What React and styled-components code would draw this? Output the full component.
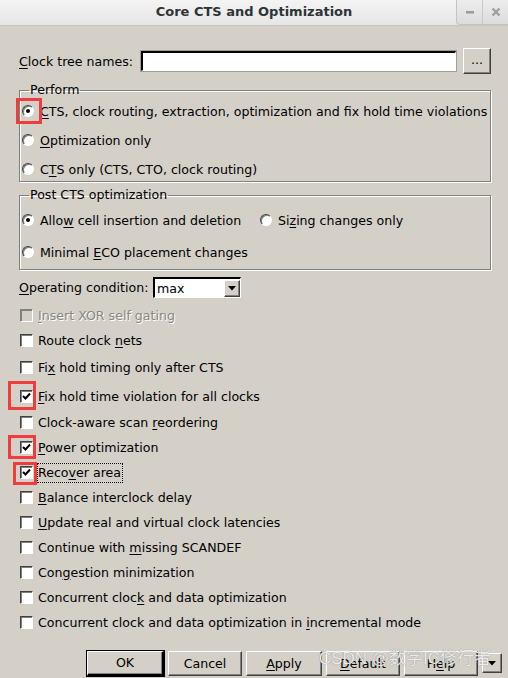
import React from "react";
import styled, { createGlobalStyle, css } from "styled-components";

const Global = createGlobalStyle`
  html, body { margin: 0; padding: 0; background: #d4d0c8; }
  body { font-family: "DejaVu Sans", "Noto Sans CJK SC", sans-serif; font-size: 12.6px; color: #000; }
`;

const Window = styled.div`
  position: relative;
  width: 508px;
  height: 678px;
  overflow: hidden;
  background: #d4d0c8;
`;

const TitleBar = styled.div`
  height: 26px;
  display: flex;
  align-items: flex-start;
  background: linear-gradient(#f4f4f4, #e6e6e6);
  border-bottom: 1px solid #c9c6bf;
  box-sizing: border-box;
  padding-left: 52px;
`;

const Title = styled.div`
  flex: 1;
  text-align: center;
  font-weight: bold;
  font-size: 13px;
  line-height: 24px;
  color: #2e3436;
`;

const WinButtons = styled.div`
  display: flex;
  height: 24px;
  border-left: 1px solid #c4c4c4;
  border-bottom: 1px solid #c4c4c4;
  border-bottom-left-radius: 4px;
  background: linear-gradient(#ededed, #dcdcdc);
`;

const WinBtn = styled.div`
  width: 25px;
  display: flex;
  align-items: center;
  justify-content: center;
  & + & { border-left: 1px solid #c8c8c8; }
`;

const Content = styled.div`
  padding: 0 17px 0 19px;
`;

const Mn = styled.span`
  text-decoration: underline;
  text-underline-offset: 2px;
`;

const TreeRow = styled.div`
  display: flex;
  align-items: center;
  margin-top: 22px;
  height: 26px;
`;

const Label = styled.span`
  white-space: nowrap;
  width: ${(p) => p.$w}px;
  flex: none;
`;

const TextInput = styled.div`
  flex: 1;
  height: 20px;
  background: #fff;
  box-sizing: border-box;
  border-top: 2px solid #000;
  border-left: 2px solid #000;
  border-right: 1px solid #fff;
  border-bottom: 1px solid #fff;
  outline: 1px solid #a09d96;
`;

const RaisedBtn = styled.div`
  box-sizing: border-box;
  background: #d4d0c8;
  border-top: 1px solid #fff;
  border-left: 1px solid #fff;
  border-right: 1px solid #404040;
  border-bottom: 1px solid #404040;
  box-shadow: inset -1px -1px 0 #808080;
  display: flex;
  align-items: center;
  justify-content: center;
  white-space: nowrap;
  flex: none;
`;

const DotsBtn = styled(RaisedBtn)`
  width: 28px;
  height: 26px;
  margin-left: 7px;
  padding-bottom: 4px;
`;

const Group = styled.fieldset`
  margin: ${(p) => p.$top}px 0 0 0;
  padding: ${(p) => p.$pad};
  border: 1px solid #808080;
  box-shadow: inset 1px 1px 0 #fff, 1px 1px 0 #fff;
  min-width: 0;
`;

const Legend = styled.legend`
  margin-left: 8px;
  padding: 0 1px;
  line-height: 14px;
  height: 14px;
`;

const RadioRows = styled.div`
  display: flex;
  flex-direction: column;
  gap: ${(p) => p.$gap}px;
`;

const RowGrid = styled.div`
  display: grid;
  grid-template-columns: ${(p) => p.$cols || "1fr"};
`;

const Option = styled.div`
  display: flex;
  align-items: center;
  height: 20px;
  white-space: nowrap;
  color: ${(p) => (p.$disabled ? "#8a877f" : "#000")};
  ${(p) =>
    p.$disabled &&
    css`
      text-shadow: 1px 1px 0 #fff;
    `}
`;

const RadioDot = styled.span`
  width: 12px;
  height: 12px;
  border-radius: 50%;
  box-sizing: border-box;
  background: #fff;
  border: 1px solid;
  border-color: #404040 #fff #fff #404040;
  box-shadow: inset 1px 1px 0 #808080;
  margin: 0 6px 0 1px;
  position: relative;
  flex: none;
  ${(p) =>
    p.$on &&
    css`
      &::after {
        content: "";
        position: absolute;
        left: 3px;
        top: 3px;
        width: 4px;
        height: 4px;
        border-radius: 50%;
        background: #000;
      }
    `}
`;

const Box = styled.span`
  width: 13px;
  height: 13px;
  box-sizing: border-box;
  background: ${(p) => (p.$disabled ? "#d4d0c8" : "#fff")};
  border-top: 1px solid ${(p) => (p.$disabled ? "#808080" : "#404040")};
  border-left: 1px solid ${(p) => (p.$disabled ? "#808080" : "#404040")};
  border-right: 1px solid #fff;
  border-bottom: 1px solid #fff;
  box-shadow: inset 1px 1px 0 #808080;
  margin: 0 5px 0 0;
  flex: none;
  display: flex;
  align-items: center;
  justify-content: center;
`;

const CondRow = styled.div`
  display: flex;
  align-items: center;
  margin-top: 7px;
  height: 21px;
`;

const Select = styled.div`
  width: 88px;
  height: 21px;
  box-sizing: border-box;
  background: #fff;
  border-top: 2px solid #000;
  border-left: 2px solid #000;
  border-right: 1px solid #fff;
  border-bottom: 1px solid #fff;
  display: flex;
  align-items: center;
  padding-left: 2px;
`;

const SelectText = styled.span`
  flex: 1;
`;

const ArrowBtn = styled(RaisedBtn)`
  width: ${(p) => p.$w || 16}px;
  height: ${(p) => p.$h || 17}px;
`;

const Checks = styled.div`
  display: flex;
  flex-direction: column;
  margin-top: 7px;
`;

const CheckRow = styled(Option)`
  margin-top: ${(p) => p.$mt || 0}px;
  padding-left: 1px;
`;

const Focus = styled.span`
  outline: 1px dotted #000;
  padding: 1px 1px 2px 0;
`;

const ButtonBar = styled.div`
  display: flex;
  justify-content: flex-end;
  align-items: center;
  gap: 4px;
  padding-right: 6px;
  margin-top: 18px;
  height: 26px;
`;

const DlgBtn = styled(RaisedBtn)`
  width: ${(p) => p.$w}px;
  height: 25px;
  ${(p) =>
    p.$default &&
    css`
      outline: 1px solid #000;
      border-right: 2px solid #000;
      border-bottom: 2px solid #000;
    `}
`;

const Mark = styled.div`
  position: absolute;
  border: 3px solid #f03c3c;
  box-sizing: border-box;
  pointer-events: none;
`;

const Watermark = styled.div`
  position: absolute;
  right: 17px;
  bottom: 9px;
  font-size: 17px;
  font-family: "Liberation Sans", "Noto Sans CJK SC", sans-serif;
  color: rgba(255, 255, 255, 0.85);
  text-shadow: 0 0 1px rgba(90, 90, 90, 0.8);
  white-space: nowrap;
  pointer-events: none;
`;

const Tick = () => (
  <svg width="9" height="9" viewBox="0 0 9 9">
    <path d="M1 4 L3.5 6.5 L8 1.5" fill="none" stroke="#000" strokeWidth="2" />
  </svg>
);

const Down = () => (
  <svg width="8" height="5" viewBox="0 0 8 5">
    <path d="M0 0 H8 L4 4.5 Z" fill="#000" />
  </svg>
);

function Check({ on, disabled, children, mt }) {
  return (
    <CheckRow $disabled={disabled} $mt={mt}>
      <Box $disabled={disabled}>{on && <Tick />}</Box>
      <span>{children}</span>
    </CheckRow>
  );
}

function Radio({ on, children }) {
  return (
    <Option>
      <RadioDot $on={on} />
      <span>{children}</span>
    </Option>
  );
}

export default function App() {
  return (
    <Window>
      <Global />
      <TitleBar>
        <Title>Core CTS and Optimization</Title>
        <WinButtons>
          <WinBtn>
            <svg width="8" height="3" viewBox="0 0 8 3">
              <rect x="0" y="0" width="8" height="2.5" fill="#9a9a9a" />
            </svg>
          </WinBtn>
          <WinBtn>
            <svg width="10" height="10" viewBox="0 0 10 10">
              <path d="M1.5 1.5 L8.5 8.5 M8.5 1.5 L1.5 8.5" stroke="#a0a0a0" strokeWidth="2.4" />
            </svg>
          </WinBtn>
        </WinButtons>
      </TitleBar>

      <Content>
        <TreeRow>
          <Label $w={122}>
            <Mn>C</Mn>lock tree names:
          </Label>
          <TextInput />
          <DotsBtn>...</DotsBtn>
        </TreeRow>

        <Group $top={9} $pad="4px 0 2px 1px">
          <Legend>Perform</Legend>
          <RadioRows $gap={9}>
            <Radio on>
              <Mn>C</Mn>TS, clock routing, extraction, optimization and fix hold time violations
            </Radio>
            <Radio>
              <Mn>O</Mn>ptimization only
            </Radio>
            <Radio>
              C<Mn>T</Mn>S only (CTS, CTO, clock routing)
            </Radio>
          </RadioRows>
        </Group>

        <Group $top={6} $pad="8px 0 7px 1px">
          <Legend>Post CTS optimization</Legend>
          <RadioRows $gap={12}>
            <RowGrid $cols="238px auto">
              <Radio on>
                Allo<Mn>w</Mn> cell insertion and deletion
              </Radio>
              <Radio>
                Si<Mn>z</Mn>ing changes only
              </Radio>
            </RowGrid>
            <Radio>
              Minimal <Mn>E</Mn>CO placement changes
            </Radio>
          </RadioRows>
        </Group>

        <CondRow>
          <Label $w={134}>
            <Mn>O</Mn>perating condition:
          </Label>
          <Select>
            <SelectText>max</SelectText>
            <ArrowBtn>
              <Down />
            </ArrowBtn>
          </Select>
        </CondRow>

        <Checks>
          <Check disabled>
            <Mn>I</Mn>nsert XOR self gating
          </Check>
          <Check mt={5}>
            Route clock <Mn>n</Mn>ets
          </Check>
          <Check mt={7}>
            Fi<Mn>x</Mn> hold timing only after CTS
          </Check>
          <Check on mt={9}>
            <Mn>F</Mn>ix hold time violation for all clocks
          </Check>
          <Check mt={6}>
            Clock-aware scan <Mn>r</Mn>eordering
          </Check>
          <Check on mt={5}>
            <Mn>P</Mn>ower optimization
          </Check>
          <Check on mt={5}>
            <Focus>
              Reco<Mn>v</Mn>er area
            </Focus>
          </Check>
          <Check mt={5}>
            <Mn>B</Mn>alance interclock delay
          </Check>
          <Check mt={5}>
            <Mn>U</Mn>pdate real and virtual clock latencies
          </Check>
          <Check mt={5}>
            Continue with <Mn>m</Mn>issing SCANDEF
          </Check>
          <Check mt={5}>
            Con<Mn>g</Mn>estion minimization
          </Check>
          <Check mt={5}>
            Concurrent cloc<Mn>k</Mn> and data optimization
          </Check>
          <Check mt={5}>
            Concurrent clock and data optimization in <Mn>i</Mn>ncremental mode
          </Check>
        </Checks>
      </Content>

      <ButtonBar>
        <DlgBtn $w={77} $default>
          OK
        </DlgBtn>
        <DlgBtn $w={74}>Cancel</DlgBtn>
        <DlgBtn $w={76}>
          <Mn>A</Mn>pply
        </DlgBtn>
        <DlgBtn $w={74}>
          <Mn>D</Mn>efault
        </DlgBtn>
        <DlgBtn $w={74}>
          H<Mn>e</Mn>lp
        </DlgBtn>
        <ArrowBtn $w={20} $h={20}>
          <Down />
        </ArrowBtn>
      </ButtonBar>

      <Mark style={{ left: 16, top: 98, width: 26, height: 26 }} />
      <Mark style={{ left: 8, top: 381, width: 28, height: 29 }} />
      <Mark style={{ left: 8, top: 435, width: 28, height: 24 }} />
      <Mark style={{ left: 13, top: 462, width: 24, height: 23 }} />

      <Watermark>CSDN @数字IC修行者</Watermark>
    </Window>
  );
}
